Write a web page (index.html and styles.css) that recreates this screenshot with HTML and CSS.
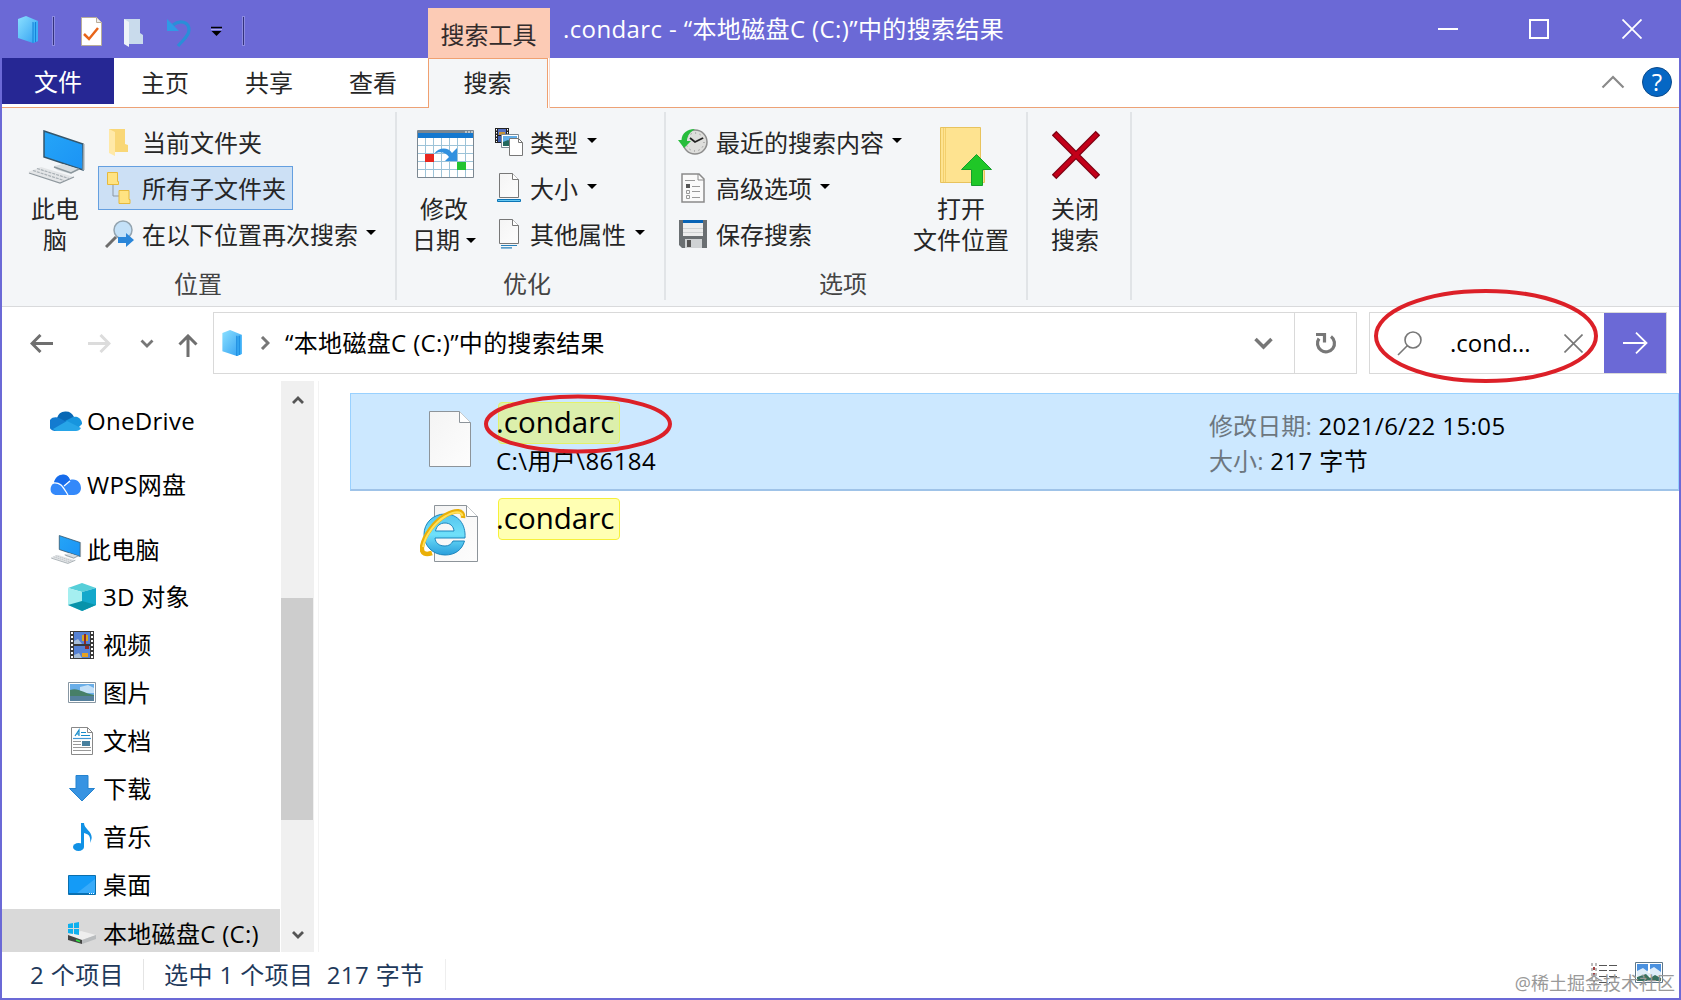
FILE: index.html
```html
<!DOCTYPE html>
<html lang="zh-CN">
<head>
    <meta charset="UTF-8">
    <meta name="viewport" content="width=device-width, initial-scale=1.0">
    <title>.condarc - “本地磁盘C (C:)”中的搜索结果</title>
    <link rel="stylesheet" href="styles.css">
</head>
<body>
    <!-- shared icons -->
    <svg class="defs">
        <defs>
            <linearGradient id="bookFill" x1="0" y1="0" x2="1" y2="1">
                <stop offset="0" stop-color="#8be0ff"/><stop offset="1" stop-color="#2f9ff2"/>
            </linearGradient>
            <linearGradient id="screenFill" x1="0" y1="0" x2="1" y2="1">
                <stop offset="0" stop-color="#25a5f7"/><stop offset="1" stop-color="#1b93f5"/>
            </linearGradient>
            <linearGradient id="paperFill" x1="0" y1="0" x2="1" y2="1">
                <stop offset="0" stop-color="#f4f4f4"/><stop offset="1" stop-color="#fdfdfd"/>
            </linearGradient>
            <linearGradient id="ieFill" x1="0" y1="0" x2="0" y2="1">
                <stop offset="0" stop-color="#55c4ee"/><stop offset=".5" stop-color="#6fe0fa"/><stop offset="1" stop-color="#2a9fdc"/>
            </linearGradient>
            <symbol id="book" viewBox="0 0 22 27">
                <path d="M1 3 9 0l12 5v20l-5 2L1 22z" fill="url(#bookFill)"/>
                <path d="M16 7l5-2v20l-5 2z" fill="#3db0f7"/>
                <path d="M16 6v21M18.500 6v20" stroke="#1583d8" stroke-width="1" fill="none"/>
            </symbol>
            <symbol id="pc" viewBox="0 0 57 54">
                <path d="M16 1l39 13v26L16 27z" fill="url(#screenFill)" stroke="#35566b" stroke-width="1.500"/>
                <path d="M55 14l1.500 0v26l-2 0z" fill="#9aa5ac"/>
                <path d="M26 36l9-2 16 5-8 5-14-4z" fill="#d9dee1"/>
                <path d="M26 37l17 6 8-4" stroke="#8c979d" stroke-width="1.500" fill="none"/>
                <path d="M0 42l13-5 33 10-14 6z" fill="#e4e6e8"/>
                <path d="M1 43l31 10 14-6" stroke="#8f989e" stroke-width="1.300" fill="none"/>
                <path d="M5 40.500l31 10M9 38.500l32 10" stroke="#a9b0b5" stroke-width="1.200" stroke-dasharray="3 1" fill="none"/>
            </symbol>
            <symbol id="page" viewBox="0 0 20 25">
                <path d="M.5.5h13l6 6v18H.5z" fill="url(#paperFill)" stroke="#777"/>
                <path d="M13.500.5v6h6" fill="#fff" stroke="#777"/>
            </symbol>
        </defs>
    </svg>

    <div class="window">
        <header class="titlebar">
            <div class="quick">
                <svg class="q-book" width="22" height="27"><use href="#book"/></svg>
                <i class="q-sep"></i>
                <svg class="q-check" width="21" height="29" viewBox="0 0 21 29"><path d="M.5.500h15l5 5v23H.5z" fill="#fff" stroke="#b9ad9a"/><path d="M15.500.5v5h5" fill="#eee" stroke="#b9ad9a"/><path d="M3 17l5 5L17 11" fill="none" stroke="#e8651a" stroke-width="2.500"/></svg>
                <svg class="q-folder" width="19" height="28" viewBox="0 0 19 28"><path d="M0 0h16v14l3 2v9H5z" fill="#c9dbec"/><path d="M0 0l5 3v25l-5-3z" fill="#edf3f8"/></svg>
                <svg class="q-undo" width="25" height="28" viewBox="0 0 25 28"><path d="M6 6C13 0 22 3 22 11c0 6-6 10-11 16" fill="none" stroke="#2a8ed8" stroke-width="3.200"/><path d="M0 0v12h12z" fill="#2f9ae6"/></svg>
                <svg class="q-more" width="11" height="11" viewBox="0 0 11 11"><path d="M0 1.500h11" stroke="#000" stroke-width="1.500"/><path d="M0 3.500h11" stroke="#aaa6ec"/><path d="M.5 5h10l-5 5z" fill="#000"/></svg>
                <i class="q-sep"></i>
            </div>
            <div class="tool-tab">搜索工具</div>
            <div class="title">.condarc - “本地磁盘C (C:)”中的搜索结果</div>
            <div class="controls">
                <svg width="20" height="20" viewBox="0 0 20 20"><path d="M0 10h20" stroke="#fff" stroke-width="2"/></svg>
                <svg width="20" height="20" viewBox="0 0 20 20"><path d="M1 1h18v18H1z" fill="none" stroke="#fff" stroke-width="2"/></svg>
                <svg width="20" height="20" viewBox="0 0 20 20"><path d="M.5.500l19 19M19.500.5l-19 19" stroke="#fff" stroke-width="1.800"/></svg>
            </div>
        </header>

        <nav class="tabs">
            <div class="tab file">文件</div>
            <div class="tab">主页</div>
            <div class="tab">共享</div>
            <div class="tab">查看</div>
            <div class="tab active">搜索</div>
            <div class="tab-end">
                <svg width="24" height="14" viewBox="0 0 24 14"><path d="M1.500 12.500L12 2l10.500 10.500" fill="none" stroke="#8a8a8a" stroke-width="2.200"/></svg>
                <span class="help">?</span>
            </div>
        </nav>

        <section class="ribbon">
            <div class="group location">
                <div class="group-body">
                    <div class="big">
                        <svg width="57" height="54"><use href="#pc"/></svg>
                        <span>此电<br>脑</span>
                    </div>
                    <div class="list">
                        <div class="cmd">
                            <span class="ico"><svg width="19" height="27" viewBox="0 0 19 27"><path d="M0 0h16v15l3 1v7H5z" fill="#f9d777"/><path d="M0 0l6 3v24l-6-3z" fill="#ffe9a8"/></svg></span>当前文件夹
                        </div>
                        <div class="cmd selected">
                            <span class="ico"><svg width="24" height="32" viewBox="0 0 24 32"><path d="M6 12v12h7" fill="none" stroke="#8d98a3"/><path d="M.5.500h10v9h1v3H.5zM12 18.500h10v9h1v4H12z" fill="#ffe382" stroke="#e6b93d"/></svg></span>所有子文件夹
                        </div>
                        <div class="cmd">
                            <span class="ico wide"><svg width="30" height="28" viewBox="0 0 30 28"><circle cx="18" cy="10" r="9" fill="#c4e1f8" stroke="#93a4b0" stroke-width="1.500"/><path d="M11 17L1 27" stroke="#6d6d6d" stroke-width="3"/><path d="M13 17h8v-4l8 7-8 7v-4h-8z" fill="#2a86d9"/></svg></span>在以下位置再次搜索<i class="arrow"></i>
                        </div>
                    </div>
                </div>
                <div class="group-name">位置</div>
            </div>

            <div class="group refine">
                <div class="group-body">
                    <div class="big">
                        <svg width="57" height="54" viewBox="0 0 57 54">
                            <path d="M.5.500h56v47H.5z" fill="#fff" stroke="#7b8791"/>
                            <path d="M1 3h55v5H1z" fill="#1478cf"/><path d="M1 1h55v2H1z" fill="#7b8791"/>
                            <path d="M48 2h2m1 0h2m1 0h2" stroke="#fff"/>
                            <path d="M8.500 8v39m8-39v39m8-39v39m8-39v39m8-39v39m8-39v39M1 15.500h55M1 23.500h55M1 31.500h55M1 39.500h55" stroke="#9cc3d8" fill="none"/>
                            <path d="M8 24h9v8H8z" fill="#e8271f"/><path d="M40 32h9v8h-9z" fill="#22c331"/>
                            <path d="M17 24c5-7 14-7 18-1l5-5v13H28l4-4c-3-5-10-6-15-3z" fill="#3291df"/>
                        </svg>
                        <span>修改<br>日期<i class="arrow"></i></span>
                    </div>
                    <div class="list">
                        <div class="cmd">
                            <span class="ico"><svg width="28" height="28" viewBox="0 0 28 28"><path d="M0 0h14v15H0z" fill="#222"/><path d="M3 1h8v6H3z" fill="#546fc1"/><path d="M4 4h6v3H4z" fill="#c69437"/><path d="M3 8h8v6H3z" fill="#3c5fb5"/><path d="M1.500 1v13M12.500 1v13" stroke="#fff" stroke-dasharray="1.500 1.500"/><path d="M6.500 6.500h17v13h-17z" fill="#fff" stroke="#7c8994"/><path d="M8 8h14v10H8z" fill="#61aee9"/><path d="M8 14l5-2 9 5v1H8z" fill="#23685e"/><path d="M14.500 10.500h9l4 4v13h-13z" fill="#fff" stroke="#777"/><path d="M23.500 10.500v4h4" fill="none" stroke="#777"/></svg></span>类型<i class="arrow"></i>
                        </div>
                        <div class="cmd">
                            <span class="ico"><svg width="24" height="30" viewBox="0 0 24 30"><use href="#page" x="2" y="0" width="20" height="25"/><path d="M.5 26.500h23v2H.5z" fill="#65c7f1" stroke="#0c75b6"/></svg></span>大小<i class="arrow"></i>
                        </div>
                        <div class="cmd">
                            <span class="ico"><svg width="24" height="30" viewBox="0 0 24 30"><use href="#page" x="2" y="0" width="20" height="25"/><path d="M4 26.500h16M4 28.900h11" stroke="#2680ba" stroke-width="1.200"/></svg></span>其他属性<i class="arrow"></i>
                        </div>
                    </div>
                </div>
                <div class="group-name">优化</div>
            </div>

            <div class="group options">
                <div class="group-body">
                    <div class="list">
                        <div class="cmd">
                            <span class="ico"><svg width="30" height="26" viewBox="0 0 30 26"><circle cx="17" cy="13" r="12" fill="#dededc" stroke="#8d8d8d" stroke-width="1.500"/><circle cx="17" cy="13" r="9" fill="none" stroke="#777" stroke-dasharray="1 3.700"/><path d="M12 9l5 4 8-4" fill="none" stroke="#222" stroke-width="1.800"/><path d="M17 0C9 0 4 4 3.500 11H0l6 8 7-7H9c0-5 3-9 8-12z" fill="#27bd3c"/></svg></span>最近的搜索内容<i class="arrow"></i>
                        </div>
                        <div class="cmd">
                            <span class="ico"><svg width="24" height="30" viewBox="0 0 24 30"><path d="M1 1h17l5 5v23H1z" fill="#fafafa" stroke="#8a8a8a" stroke-width="1.500"/><path d="M17 1v6h6" fill="none" stroke="#8a8a8a"/><path d="M4 7.500h10M11 13.500h8M11 18.500h8M11 24.500h8" stroke="#999"/><path d="M5 11h4v4H5z" fill="#555"/><path d="M5.500 17.500h3v3h-3zM5.500 22.500h3v3h-3z" fill="none" stroke="#999"/></svg></span>高级选项<i class="arrow"></i>
                        </div>
                        <div class="cmd">
                            <span class="ico"><svg width="28" height="28" viewBox="0 0 28 28"><path d="M0 0h28v28H3l-3-3z" fill="#6a6f72"/><path d="M4 0h20v3H4z" fill="#0763b5"/><path d="M4 3h20v13H4z" fill="#eceded"/><path d="M4 8.500h20M4 12.500h20" stroke="#cfd2d3"/><path d="M6 19h17v9H6z" fill="#cfd2d4"/><path d="M8 20h4v7H8z" fill="#555"/></svg></span>保存搜索
                        </div>
                    </div>
                    <div class="big">
                        <svg width="53" height="60" viewBox="0 0 53 60"><path d="M.5.500h40v43h4v12H.5z" fill="#fee390" stroke="#e8c35d"/><path d="M3.500 1v54M5.500 1v54" stroke="#f3cf6d"/><path d="M36.500 27.500l15 15h-9v16h-11v-16h-10z" fill="#1fc727" stroke="#159d2b"/></svg>
                        <span>打开<br>文件位置</span>
                    </div>
                </div>
                <div class="group-name">选项</div>
            </div>

            <div class="group close">
                <div class="group-body">
                    <div class="big">
                        <svg width="48" height="54" viewBox="0 0 48 54"><path d="M2 3l44 44M46 3L2 47" stroke="#7c0012" stroke-width="6.500"/><path d="M3 4l42 42M45 4L3 46" stroke="#c30019" stroke-width="4"/></svg>
                        <span>关闭<br>搜索</span>
                    </div>
                </div>
            </div>
        </section>

        <div class="address-row">
            <div class="nav-buttons">
                <svg class="back" width="23" height="19" viewBox="0 0 23 19"><path d="M10.500 1L2 9.500l8.500 8.500M2 9.500h21" fill="none" stroke="#6f6f6f" stroke-width="3"/></svg>
                <svg class="forward" width="23" height="19" viewBox="0 0 23 19"><path d="M12.500 1L21 9.500 12.500 18M21 9.500H0" fill="none" stroke="#dcdcdc" stroke-width="3"/></svg>
                <svg class="recent" width="14" height="9" viewBox="0 0 14 9"><path d="M1.500 1.500L7 7l5.500-5.500" fill="none" stroke="#777" stroke-width="2.800"/></svg>
                <svg class="up" width="20" height="23" viewBox="0 0 20 23"><path d="M1.500 10.500L10 2l8.500 8.500M10 2v21" fill="none" stroke="#6f6f6f" stroke-width="3"/></svg>
            </div>
            <div class="address">
                <svg class="book" width="22" height="26"><use href="#book"/></svg>
                <svg class="crumb" width="10" height="14" viewBox="0 0 10 14"><path d="M2 1l6 6-6 6" fill="none" stroke="#777" stroke-width="3"/></svg>
                <span class="path">“本地磁盘C (C:)”中的搜索结果</span>
                <svg class="drop" width="19" height="13" viewBox="0 0 19 13"><path d="M1.500 2l8 8 8-8" fill="none" stroke="#777" stroke-width="3.500"/></svg>
                <div class="refresh">
                    <svg width="22" height="23" viewBox="0 0 22 23"><path d="M16 4.500A8.500 8.500 0 1 1 4 6.500" fill="none" stroke="#777" stroke-width="3.200"/><path d="M1 2.500h8.500v8" fill="none" stroke="#777" stroke-width="3.200"/></svg>
                </div>
            </div>
            <div class="search">
                <svg class="glass" width="25" height="25" viewBox="0 0 25 25"><circle cx="16" cy="9" r="8" fill="none" stroke="#777" stroke-width="1.600"/><path d="M10.500 14.500L1 24" stroke="#777" stroke-width="1.600"/></svg>
                <span class="query">.cond...</span>
                <svg class="clear" width="19" height="19" viewBox="0 0 19 19"><path d="M.5.500l18 18M18.500.5l-18 18" stroke="#777" stroke-width="1.600"/></svg>
                <div class="go">
                    <svg width="25" height="22" viewBox="0 0 25 22"><path d="M0 11h23M13 .7L23.500 11 13 21.300" fill="none" stroke="#fff" stroke-width="1.800"/></svg>
                </div>
                <svg class="ring search-ring" width="226" height="96" viewBox="0 0 226 96"><ellipse cx="113" cy="48" rx="110" ry="45" fill="none" stroke="#dc2028" stroke-width="4"/></svg>
            </div>
        </div>

        <main class="content">
            <aside class="tree">
                <div class="node root"><span class="ico"><svg width="32" height="21" viewBox="0 0 32 21"><path d="M7 8a9 9 0 0 1 17-1l-8 8z" fill="#0868b5"/><path d="M7 21a7 7 0 1 1 2-13l12 6z" fill="#137bd0"/><path d="M15 11l8-4a7 7 0 0 1 9 7l-4 4z" fill="#1795de"/><path d="M3 19l14-8 14 7c-1 2-3 3-5 3H7c-2 0-3-.7-4-2z" fill="#27a5e8"/></svg></span>OneDrive</div>
                <div class="node root"><span class="ico"><svg width="32" height="21" viewBox="0 0 32 21"><path d="M4 9C5 0 17-3 20 6c7-2 11 3 11 8 0 4-3 7-7 7H7c-8 0-8-9-3-12z" fill="#3489fa"/><path d="M4 9C6-1 18-2 20 6l-6 6c-3-3-6-4-10-3z" fill="#176ceb"/><path d="M3 9c8-1 10 4 15 12M14 12l6-5" fill="none" stroke="#fff" stroke-width="1.300"/></svg></span>WPS网盘</div>
                <div class="node root"><span class="ico"><svg width="32" height="29"><use href="#pc"/></svg></span>此电脑</div>
                <div class="node"><span class="ico"><svg width="28" height="28" viewBox="0 0 28 28"><path d="M0 5l14-5 14 5-14 4z" fill="#57cfd9"/><path d="M0 5l14 4v19L0 22z" fill="#a5eff0"/><path d="M28 5L14 9v19l14-6z" fill="#14a8cb"/><path d="M0 22l14-4 14 4-14 6z" fill="#0893aa"/></svg></span>3D 对象</div>
                <div class="node"><span class="ico"><svg width="24" height="28" viewBox="0 0 24 28"><path d="M0 0h24v28H0z" fill="#3a3a3a"/><path d="M4 1h16v12H4zM4 15h16v12H4z" fill="#5581d4"/><path d="M4 10l4-2 4 5H4zM4 24l5-2 3 5H4z" fill="#a7bed9"/><path d="M12 4h6v6h-6z" fill="#d8a720"/><path d="M14 3h2v10h-2zM15 15h4v3h-4z" fill="#8f2925"/><path d="M12 22h6v4h-6z" fill="#e6a223"/><path d="M2 1v27M22 1v27" stroke="#fff" stroke-width="2" stroke-dasharray="2 2"/></svg></span>视频</div>
                <div class="node"><span class="ico"><svg width="28" height="21" viewBox="0 0 28 21"><path d="M.5.500h27v20H.5z" fill="#fff" stroke="#8796a2"/><path d="M2 2h24v17H2z" fill="#6aaee8"/><path d="M12 5l8-2 6 3v5H12z" fill="#c3e0f8"/><path d="M2 8c8-3 13 3 24 5v2H2z" fill="#477f68"/><path d="M2 14h24v5H2z" fill="#55809d"/></svg></span>图片</div>
                <div class="node"><span class="ico"><svg width="22" height="28" viewBox="0 0 22 28"><path d="M.5.500h16l5 5v22H.5z" fill="#fff" stroke="#888"/><path d="M16.500.5v5h5" fill="none" stroke="#888"/><path d="M4 9l4-6v6M5 7h3M10 5.500h5M10 8.500h9" stroke="#178bc9" stroke-width="1.200" fill="none"/><path d="M2 11.500h18" stroke="#4598d4" stroke-width="1.200"/><path d="M2 14.500h8M2 17.500h8M2 20.500h18M2 23.500h18" stroke="#999"/><path d="M11 14h8v5h-8z" fill="#467f9d"/></svg></span>文档</div>
                <div class="node"><span class="ico"><svg width="26" height="27" viewBox="0 0 26 27"><path d="M7 .5h12v13h6.500L13 26 .5 13.500H7z" fill="#3793e2" stroke="#2583cf"/></svg></span>下载</div>
                <div class="node"><span class="ico"><svg width="19" height="28" viewBox="0 0 19 28"><ellipse cx="5.500" cy="24" rx="5.500" ry="4" fill="#1191e5"/><path d="M8 24V0h3c0 7 12 9 6 20 1-6-1-9-6-10v14z" fill="#1191e5"/></svg></span>音乐</div>
                <div class="node"><span class="ico"><svg width="28" height="20" viewBox="0 0 28 20"><path d="M.5.500h27v19H.5z" fill="#149bf7" stroke="#0a6fae"/><path d="M9 18L27 4v14z" fill="#38abfa"/><path d="M1 18.500h20" stroke="#0870b4"/><path d="M21 18.500h6" stroke="#fff" stroke-dasharray="1 1"/></svg></span>桌面</div>
                <div class="node current"><span class="ico"><svg width="28" height="22" viewBox="0 0 28 22"><path d="M0 13l13-4 15 4-14 5z" fill="#eee"/><path d="M0 13l14 5v4L0 18z" fill="#444"/><path d="M14 18l14-5v4l-14 5z" fill="#b9bcbe"/><path d="M8 18l4 1.500" stroke="#2ee03e" stroke-width="1.500"/><path d="M0 2l5-1v5H0zM6 1l5-1v6H6zM0 7h5v5l-5-1zM6 7h5v6l-5-1z" fill="#0db0ee"/></svg></span>本地磁盘C (C:)</div>
            </aside>
            <div class="scrollbar">
                <svg width="12" height="10" viewBox="0 0 12 10"><path d="M1 8l5-5 5 5" fill="none" stroke="#555" stroke-width="2.800"/></svg>
                <div class="thumb"></div>
                <svg width="12" height="10" viewBox="0 0 12 10"><path d="M1 2l5 5 5-5" fill="none" stroke="#555" stroke-width="2.800"/></svg>
            </div>

            <div class="results">
                <div class="result selected">
                    <div class="thumbnail"><svg width="42" height="56" viewBox="0 0 42 56"><path d="M.5.500h30l11 11v44H.5z" fill="url(#paperFill)" stroke="#8d949a"/><path d="M30.500.5v11h11" fill="#fff" stroke="#8d949a"/></svg></div>
                    <div class="file-info">
                        <div class="name"><mark>.condarc</mark></div>
                        <div class="place">C:\用户\86184</div>
                    </div>
                    <div class="meta">
                        <div><span>修改日期:</span> 2021/6/22 15:05</div>
                        <div><span>大小:</span> 217 字节</div>
                    </div>
                    <svg class="ring name-ring" width="190" height="60" viewBox="0 0 190 60"><ellipse cx="95" cy="30" rx="92" ry="27.500" fill="none" stroke="#dc2028" stroke-width="4"/></svg>
                </div>
                <div class="result">
                    <div class="thumbnail"><svg width="58" height="57" viewBox="0 0 58 57">
                        <path d="M14.500.5h32l11 11v45h-43z" fill="url(#paperFill)" stroke="#8d949a"/><path d="M46.500.5v11h11" fill="#fff" stroke="#8d949a"/>
                        <!-- browser "e": ring with a bar and an open lower right side -->
                        <path d="M25 9C13 9 4 18 4 29.500S13 50 25 50c10 0 17-5 19.500-14H33c-1.500 3-4 5-8 5-6 0-9.500-3-10-8h30C46 19 38 9 25 9zM15.500 26c1-5 4.500-8 9.500-8s8.500 3 9 8z" fill="url(#ieFill)" stroke="#1d86bd"/>
                        <path d="M43 13c1-9-8-8-17-3C15 16 4 30 2 42c-1 7 4 8 10 6" fill="none" stroke="#eab008" stroke-width="4.500"/>
                        <path d="M42.500 11c-1-5-8-5-16.500 0C15 17 5 31 3 42" fill="none" stroke="#ffe15a" stroke-width="2"/>
                    </svg></div>
                    <div class="file-info">
                        <div class="name"><mark>.condarc</mark></div>
                    </div>
                </div>
            </div>
        </main>

        <footer class="statusbar">
            <span class="count">2 个项目</span>
            <span class="picked">选中 1 个项目&nbsp; 217 字节</span>
            <div class="views">
                <svg width="28" height="24" viewBox="0 0 28 24"><path d="M1 1v22M5 1v22" stroke="#777" stroke-dasharray="3 2"/><path d="M3 5v3m0 3v2m0 5v2" stroke="#a34343" stroke-width="2"/><path d="M8 3.500h19M8 8.500h19M8 14.500h19M8 20.500h19" stroke="#555" stroke-dasharray="8 2"/></svg>
                <svg width="28" height="21" viewBox="0 0 28 21"><path d="M.5.500h27v20H.5z" fill="#fff" stroke="#5e7789"/><path d="M2 2h24v12H2z" fill="#4b91df"/><path d="M2 9l6-3 4 3 7-4 7 5v4H2z" fill="#dfedf9"/><path d="M2 15l9-3 4 4 5-3 6 3v3H2z" fill="#39705f"/><path d="M14 2v9" stroke="#fff" stroke-width="2"/></svg>
            </div>
            <span class="watermark">@稀土掘金技术社区</span>
        </footer>
    </div>
</body>
</html>
```
FILE: styles.css
```css
* {
    box-sizing: border-box;
}
body {
    margin: 0;
    font-family: "Open Sans", "Noto Sans CJK SC", sans-serif;
    font-size: 24px;
    line-height: 31px;
    color: #000;
}
svg {
    display: block;
    flex: none;
}
.defs {
    position: absolute;
    width: 0;
    height: 0;
}
.window {
    display: flex;
    flex-direction: column;
    width: 1681px;
    height: 1000px;
    border: 2px solid #6b69d6;
    border-top: 0;
    background: #fff;
    overflow: hidden;
    white-space: nowrap;
}

/* title bar */
.titlebar {
    display: flex;
    flex: none;
    height: 58px;
    margin: 0 -2px;
    background: #6b69d6;
}
.quick {
    display: flex;
    align-items: flex-start;
    width: 428px;
    padding: 16px 0 0 17px;
}
.q-sep {
    width: 3px;
    height: 30px;
    border: 1px solid #8d8be0;
    background: #34337c;
}
.q-book {
    margin-right: 13px;
}
.q-check {
    margin: 1px 22px 0 26px;
}
.q-folder {
    margin: 3px 24px 0 0;
}
.q-undo {
    margin: 3px 19px 0 0;
}
.q-more {
    margin: 10px 20px 0 0;
}
.tool-tab {
    width: 122px;
    margin-top: 8px;
    padding: 11px 1px 0 0;
    text-align: center;
    background: #fccbb5;
    color: #332c2c;
}
.title {
    flex: 1;
    padding: 13px 0 0 13px;
    color: #fff;
    letter-spacing: 0.38px;
}
.controls {
    display: flex;
    gap: 72px;
    padding: 19px 39px 0 0;
}
.controls svg:nth-child(2) {
    margin: 0 1px 0 -1px;
}

/* tabs */
.tabs {
    display: flex;
    flex: none;
    height: 50px;
    border-bottom: 1px solid #eda276;
    color: #262626;
}
.tab {
    width: 104px;
    padding: 9px 2px 0 0;
    text-align: center;
}
.tab.file {
    width: 112px;
    height: 46px;
    padding: 8px 0 0;
    background: #262794;
    color: #fff;
}
.tab:nth-child(4) {
    width: 106px;
    padding-right: 4px;
}
.tab.active {
    width: 120px;
    height: 50px;
    padding: 8px 1px 0 0;
    border: 1px solid #f0a070;
    border-bottom: 0;
    background: #f4f6f8;
    box-shadow: 1px 0 0 #fff, 2px 0 0 #f7d9cc;
}
.tab-end {
    display: flex;
    align-items: center;
    gap: 17px;
    margin-left: auto;
    padding: 0 7px 1px 0;
}
.help {
    width: 30px;
    height: 30px;
    border-radius: 50%;
    border: 1px solid #0a4a8c;
    background: #0567c4;
    color: #fff;
    line-height: 28px;
    text-align: center;
}

/* ribbon */
.ribbon {
    display: flex;
    flex: none;
    height: 199px;
    padding-top: 4px;
    border-bottom: 1px solid #d9dadc;
    background: #f4f6f8;
    color: #262626;
}
.group {
    display: flex;
    flex-direction: column;
    height: 188px;
    border-right: 2px solid #e1e4e7;
}
.group-body {
    display: flex;
    height: 156px;
}
.group-name {
    color: #444;
    text-align: center;
}
.location {
    width: 395px;
}
.location .group-name {
    padding-right: 1px;
}
.refine {
    width: 269px;
}
.refine .group-name {
    padding-right: 7px;
}
.options {
    width: 362px;
}
.options .group-name {
    padding-right: 6px;
}
.close {
    width: 104px;
}
.big {
    display: flex;
    flex-direction: column;
    align-items: center;
    padding-top: 18px;
    text-align: center;
}
.big span {
    margin-top: 9px;
}
.location .big {
    width: 96px;
    padding-left: 10px;
}
.location .big svg {
    margin-left: 2px;
}
.refine .big {
    width: 95px;
    padding-left: 2px;
}
.refine .big span {
    margin-left: -3px;
}
.options .big {
    width: 110px;
    padding-top: 15px;
}
.options .big svg {
    margin-left: 10px;
}
.options .big span {
    margin-top: 6px;
}
.close .big {
    width: 95px;
}
.close .big span {
    margin-left: -1px;
}
.list {
    padding-top: 8px;
}
.options .list {
    width: 240px;
    padding-left: 8px;
}
.cmd {
    display: flex;
    align-items: center;
    width: max-content;
    height: 44px;
    margin-bottom: 2px;
    padding: 0 6px 0 8px;
    border: 1px solid transparent;
}
.cmd.selected {
    border-color: #649fe0;
    background: #cce0f5;
}
.cmd .ico {
    display: flex;
    justify-content: center;
    width: 28px;
    margin-right: 7px;
}
.location .ico {
    width: 24px;
    margin: 0 12px 0 -1px;
}
.location .selected .ico {
    margin: 0 11px 0 0;
}
.location .ico.wide {
    width: 30px;
    margin: 0 7px 0 -2px;
}
.refine .cmd {
    padding-left: 2px;
}
.options .cmd {
    padding-left: 3px;
}
.options .cmd .ico {
    width: 30px;
    margin-right: 8px;
}
.arrow {
    display: inline-block;
    margin: 0 0 4px 8px;
    border: 5px solid transparent;
    border-top-color: #000;
    border-bottom: 0;
    vertical-align: middle;
}
.refine .list .arrow {
    margin-left: 9px;
}
.big .arrow {
    margin-left: 6px;
}

/* address bar */
.address-row {
    display: flex;
    flex: none;
    height: 74px;
    padding-top: 5px;
}
.nav-buttons {
    display: flex;
    align-items: center;
    width: 211px;
    height: 62px;
    padding-left: 28px;
}
.forward {
    margin-left: 35px;
}
.recent {
    margin-left: 29px;
}
.up {
    margin: 4px 0 0 24px;
}
.address {
    display: flex;
    align-items: center;
    width: 1144px;
    height: 62px;
    border: 1px solid #d9d9d9;
}
.address .book {
    margin: 0 17px 0 7px;
}
.path {
    flex: 1;
    padding: 0 0 1px 15px;
    letter-spacing: 0.35px;
}
.drop {
    margin-right: 21px;
}
.refresh {
    display: flex;
    align-items: center;
    justify-content: center;
    width: 62px;
    height: 60px;
    border-left: 1px solid #d9d9d9;
}
.search {
    position: relative;
    display: flex;
    align-items: center;
    width: 298px;
    height: 62px;
    margin-left: 12px;
    border: 1px solid #d9d9d9;
}
.glass {
    margin-left: 27px;
}
.query {
    flex: 1;
    padding: 0 0 1px 28px;
}
.clear {
    margin-right: 21px;
}
.go {
    display: flex;
    align-items: center;
    justify-content: center;
    width: 62px;
    height: 60px;
    background: #6b69d6;
}
.ring {
    position: absolute;
    pointer-events: none;
}
.search-ring {
    left: 3px;
    top: -25px;
    z-index: 2;
}

/* navigation tree */
.content {
    display: flex;
    flex: none;
    height: 571px;
}
.tree {
    width: 278px;
    height: 571px;
    padding-top: 9px;
    overflow: hidden;
    letter-spacing: 0.3px;
}
.node {
    display: flex;
    align-items: center;
    height: 48px;
    padding: 0 0 3px 66px;
}
.node.root {
    height: 64px;
    padding-left: 48px;
}
.node.root:nth-child(3) {
    height: 56px;
    padding-bottom: 0;
    padding-top: 6px;
}
.node.current {
    height: 44px;
    margin-top: -1px;
    padding: 4px 0 0 66px;
    background: #d9d9d9;
}
.node .ico {
    display: flex;
    justify-content: center;
    width: 28px;
    margin-right: 7px;
}
.node.root .ico {
    width: 32px;
    margin-right: 5px;
}
.scrollbar {
    display: flex;
    flex-direction: column;
    align-items: center;
    width: 33px;
    margin-left: 1px;
    padding: 14px 0 12px;
    background: #f0f0f0;
}
.thumb {
    width: 32px;
    height: 222px;
    margin: 193px 1px auto 0;
    background: #cdcdcd;
}

/* search results */
.results {
    flex: 1;
    margin-left: 4px;
    padding: 12px 0 0 31px;
    border-left: 1px solid #f3f3f3;
}
.result {
    position: relative;
    display: flex;
    height: 98px;
    padding: 8px 0 0 65px;
    border: 1px solid transparent;
}
.result.selected {
    border-color: #99d1ff;
    border-bottom: 2px solid #9fc3e8;
    background: #cce8ff;
}
.thumbnail {
    display: flex;
    justify-content: center;
    width: 68px;
    padding-top: 9px;
}
.result:not(.selected) .thumbnail {
    padding: 5px 2px 0 0;
}
.file-info {
    width: 725px;
    padding-left: 12px;
}
.name {
    height: 42px;
    font-size: 29.5px;
    line-height: 38px;
}
.name mark {
    display: inline-block;
    width: 122px;
    height: 42px;
    margin-left: 2px;
    border: 1px solid #f6f03a;
    border-radius: 4px;
    background: #ffffb3;
    text-indent: -3px;
}
.selected .name mark {
    background: #dcefac;
    border-color: #e4f268;
}
.result:not(.selected) .name {
    margin-top: -2px;
}
.place {
    margin-top: 1px;
    letter-spacing: 0.4px;
}
.meta {
    padding: 6px 0 0;
    line-height: 35px;
    letter-spacing: 0.4px;
}
.meta span {
    color: #6d7780;
    letter-spacing: 0.1px;
}
.name-ring {
    left: 132px;
    top: 0;
}

/* status bar */
.statusbar {
    position: relative;
    display: flex;
    flex: none;
    align-items: center;
    height: 46px;
    padding: 0 0 2px 28px;
    color: #1e395b;
    letter-spacing: 0.4px;
}
.count {
    width: 114px;
    border-right: 1px solid #e4e4e4;
}
.picked {
    width: 302px;
    padding-left: 20px;
    border-right: 1px solid #eee;
}
.views {
    display: flex;
    gap: 16px;
    margin: 0 16px 0 auto;
}
.watermark {
    position: absolute;
    right: 4px;
    bottom: 2px;
    font-size: 18px;
    line-height: 26px;
    letter-spacing: 0;
    color: #999;
}
```
